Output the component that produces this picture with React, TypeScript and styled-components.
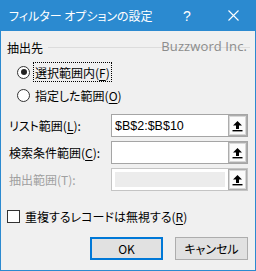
import React from 'react';
import styled, { createGlobalStyle } from 'styled-components';

const GlobalStyle = createGlobalStyle`
  html, body {
    margin: 0;
    padding: 0;
    background: #f0f0f0;
  }
  body {
    font-family: "Noto Sans CJK JP", "Noto Sans", sans-serif;
    font-size: 12px;
    font-feature-settings: "palt";
    color: #000;
  }
`;

const Window = styled.div`
  width: 256px;
  height: 271px;
  box-sizing: border-box;
  border: 1px solid #2b8ad0;
  border-top: none;
  background: #f0f0f0;
  position: relative;
  overflow: hidden;
`;

const TitleBar = styled.div`
  height: 31px;
  margin: 0 -1px;
  background: #2b8ad0;
  color: #fff;
  display: flex;
  align-items: center;
`;

const Title = styled.div`
  flex: 1;
  padding-left: 9px;
  font-size: 12px;
  line-height: 1;
`;

const TitleButton = styled.div`
  width: 46px;
  height: 31px;
  display: flex;
  align-items: center;
  justify-content: center;
  font-family: "Liberation Sans", sans-serif;
  font-size: 14px;
`;

const Body = styled.div`
  padding: 8px 7px 0 6px;
`;

const GroupHeader = styled.div`
  height: 16px;
  display: flex;
  align-items: center;
  gap: 5px;
  margin-right: -2px;
`;

const GroupLine = styled.div`
  flex: 1;
  height: 1px;
  background: #dcdcdc;
`;

const Watermark = styled.div`
  position: absolute;
  top: 37px;
  right: 8px;
  font-family: "Open Sans", "Liberation Sans", sans-serif;
  font-size: 13px;
  color: #8c8c8c;
  letter-spacing: 0.1px;
`;

const RadioRow = styled.div<{ $top: number }>`
  height: 20px;
  margin-top: ${({ $top }) => $top}px;
  margin-left: 10px;
  display: flex;
  align-items: center;
  gap: 3px;
`;

const RadioCircle = styled.div<{ $checked?: boolean }>`
  width: 11px;
  height: 11px;
  border: 1px solid #333;
  border-radius: 50%;
  background: #fff;
  display: flex;
  align-items: center;
  justify-content: center;
  &::after {
    content: '';
    display: ${({ $checked }) => ($checked ? 'block' : 'none')};
    width: 6px;
    height: 6px;
    border-radius: 50%;
    background: #222;
  }
`;

const Label = styled.span<{ $focus?: boolean; $disabled?: boolean }>`
  display: inline-flex;
  align-items: center;
  height: 18px;
  padding: 0 1px;
  border: 1px ${({ $focus }) => ($focus ? 'dotted #000' : 'solid transparent')};
  color: ${({ $disabled }) => ($disabled ? '#a0a0a0' : '#000')};
  white-space: nowrap;
`;

const Key = styled.span`
  text-decoration: underline;
  text-underline-offset: 2px;
`;

const FieldGrid = styled.div`
  margin-top: 9px;
  display: grid;
  grid-template-columns: 104px 137px;
  row-gap: 4px;
  align-items: center;
`;

const InputBox = styled.div<{ $disabled?: boolean }>`
  height: 23px;
  box-sizing: border-box;
  border: 1px solid ${({ $disabled }) => ($disabled ? '#c4c4c4' : '#a5a5a5')};
  background: #fff;
  display: flex;
  align-items: stretch;
`;

const InputText = styled.div`
  flex: 1;
  padding-left: 3px;
  display: flex;
  align-items: center;
  font-family: "Liberation Sans", sans-serif;
  font-size: 12.5px;
`;

const DisabledFill = styled.div`
  flex: 1;
  margin: 3px 3px 3px 3px;
  background: #ececec;
`;

const PickButton = styled.div`
  width: 19px;
  box-sizing: border-box;
  border: 1px solid #adadad;
  box-shadow: inset 0 0 0 1px #d8d8d8;
  background: #fbfbfb;
  display: flex;
  align-items: center;
  justify-content: center;
`;

const CheckRow = styled.div`
  margin-top: 17px;
  height: 16px;
  display: flex;
  align-items: center;
  gap: 3px;
`;

const CheckBox = styled.div`
  width: 13px;
  height: 13px;
  box-sizing: border-box;
  border: 1px solid #333;
  background: #fff;
`;

const ButtonRow = styled.div`
  margin-top: 13px;
  display: flex;
  justify-content: flex-end;
  gap: 12px;
`;

const Button = styled.div<{ $default?: boolean }>`
  width: 73px;
  height: 23px;
  box-sizing: border-box;
  border: ${({ $default }) => ($default ? '2px solid #0078d7' : '1px solid #adadad')};
  background: #e1e1e1;
  display: flex;
  align-items: center;
  justify-content: center;
  font-size: 12px;
`;

const UpArrow = () => (
  <svg width="11" height="12" viewBox="0 0 11 12">
    <path d="M5.5 1 L10 5.5 L7 5.5 L7 9 L4 9 L4 5.5 L1 5.5 Z" fill="#000" />
    <rect x="0.5" y="10" width="10" height="1.4" fill="#000" />
  </svg>
);

const CloseIcon = () => (
  <svg width="11" height="11" viewBox="0 0 11 11">
    <path d="M0.5 0.5 L10.5 10.5 M10.5 0.5 L0.5 10.5" stroke="#fff" strokeWidth="1.1" />
  </svg>
);

const App: React.FC = () => {
  return (
    <>
      <GlobalStyle />
      <Window>
        <TitleBar>
          <Title>フィルター オプションの設定</Title>
          <TitleButton>?</TitleButton>
          <TitleButton>
            <CloseIcon />
          </TitleButton>
        </TitleBar>
        <Watermark>Buzzword Inc.</Watermark>
        <Body>
          <GroupHeader>
            <span>抽出先</span>
            <GroupLine />
          </GroupHeader>
          <RadioRow $top={7}>
            <RadioCircle $checked />
            <Label $focus>
              選択範囲内(<Key>F</Key>)
            </Label>
          </RadioRow>
          <RadioRow $top={3}>
            <RadioCircle />
            <Label>
              指定した範囲(<Key>O</Key>)
            </Label>
          </RadioRow>
          <FieldGrid>
            <Label>
              リスト範囲(<Key>L</Key>):
            </Label>
            <InputBox>
              <InputText>$B$2:$B$10</InputText>
              <PickButton>
                <UpArrow />
              </PickButton>
            </InputBox>
            <Label>
              検索条件範囲(<Key>C</Key>):
            </Label>
            <InputBox>
              <InputText />
              <PickButton>
                <UpArrow />
              </PickButton>
            </InputBox>
            <Label $disabled>抽出範囲(T):</Label>
            <InputBox $disabled>
              <DisabledFill />
              <PickButton>
                <UpArrow />
              </PickButton>
            </InputBox>
          </FieldGrid>
          <CheckRow>
            <CheckBox />
            <Label>
              重複するレコードは無視する(<Key>R</Key>)
            </Label>
          </CheckRow>
          <ButtonRow>
            <Button $default>OK</Button>
            <Button>キャンセル</Button>
          </ButtonRow>
        </Body>
      </Window>
    </>
  );
};

export default App;
